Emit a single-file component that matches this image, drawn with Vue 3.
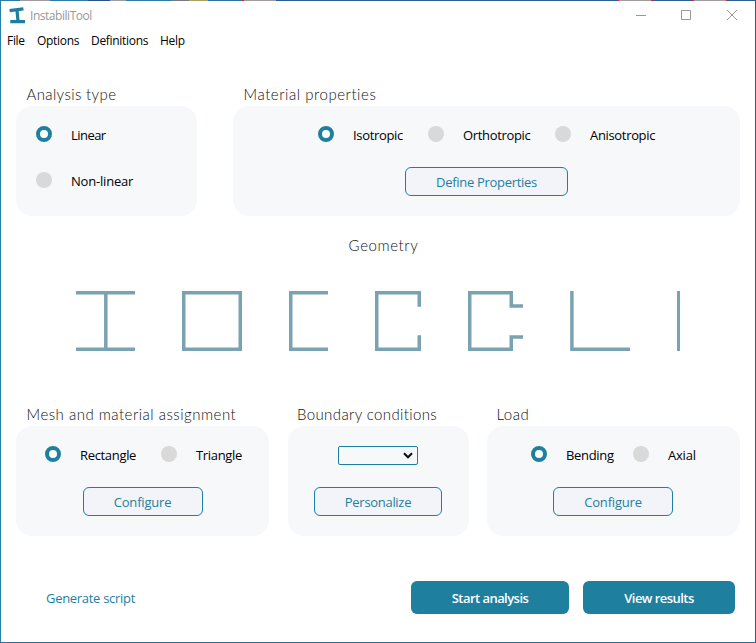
<script setup>
import { reactive } from 'vue'

const menu = ['File', 'Options', 'Definitions', 'Help']
const chosen = reactive({ analysis: 'Linear', material: 'Isotropic', mesh: 'Rectangle', load: 'Bending' })

// Cross sections: width of the drawing and its centre line
const shapes = [
  { name: 'i', w: 59, d: 'M0 1.75H59M0 58.25H59M29.8 2V58' },
  { name: 'box', w: 60, d: 'M1.75 1.75H58.25V58.25H1.75Z' },
  { name: 'channel', w: 39, d: 'M39 1.75H1.75V58.25H39' },
  { name: 'lipped', w: 46, d: 'M44.25 15.8V1.75H1.75V58.25H44.25V44.2' },
  { name: 'sigma', w: 55, d: 'M55 14.9H43.25V1.75H1.75V58.25H43.25V46.1H55' },
  { name: 'angle', w: 60, d: 'M1.9 0V58.25H60' },
  { name: 'plate', w: 3, d: 'M1.5 0V60' },
]
</script>

<template>
  <div class="window">
    <header class="titlebar">
      <svg class="logo" width="17" height="17" viewBox="0 0 17 17">
        <path d="M.6 3.7 14.4 1.8M1.3 14.7H16" stroke-width="3.3" />
        <path d="M8 3.2 9 14" stroke-width="3.2" />
      </svg>
      <span class="app-name">InstabiliTool</span>
      <svg class="controls" width="103" height="12" viewBox="0 0 103 12">
        <path d="M0 6.5H10M45.5 1.5H54.5V10.5H45.5ZM91 1 101 11M101 1 91 11" />
      </svg>
    </header>
    <nav class="menu">
      <span v-for="m in menu" :key="m" :class="m.toLowerCase()">{{ m }}</span>
    </nav>

    <main>
      <div class="row top">
        <section>
          <h2 class="h-analysis">Analysis type</h2>
          <div class="panel analysis">
            <label v-for="o in ['Linear', 'Non-linear']" :key="o" :class="o.toLowerCase()">
              <input v-model="chosen.analysis" type="radio" :value="o" name="analysis" /><span>{{ o }}</span>
            </label>
          </div>
        </section>
        <section>
          <h2 class="h-material">Material properties</h2>
          <div class="panel material">
            <div class="options">
              <label v-for="o in ['Isotropic', 'Orthotropic', 'Anisotropic']" :key="o" :class="o.toLowerCase()">
                <input v-model="chosen.material" type="radio" :value="o" name="material" /><span>{{ o }}</span>
              </label>
            </div>
            <button class="outline define">Define Properties</button>
          </div>
        </section>
      </div>

      <h2 class="h-geometry">Geometry</h2>
      <div class="shapes">
        <svg v-for="s in shapes" :key="s.name" :width="s.w" height="60" :viewBox="`0 0 ${s.w} 60`">
          <path :d="s.d" />
        </svg>
      </div>

      <div class="row bottom">
        <section>
          <h2 class="h-mesh">Mesh and material assignment</h2>
          <div class="panel mesh">
            <div class="options">
              <label v-for="o in ['Rectangle', 'Triangle']" :key="o" :class="o.toLowerCase()">
                <input v-model="chosen.mesh" type="radio" :value="o" name="mesh" /><span>{{ o }}</span>
              </label>
            </div>
            <button class="outline">Configure</button>
          </div>
        </section>
        <section>
          <h2 class="h-boundary">Boundary conditions</h2>
          <div class="panel boundary">
            <div class="select">
              <svg width="10" height="7" viewBox="0 0 10 7"><path d="M1 1.2 5 5.2 9 1.2" /></svg>
            </div>
            <button class="outline personalize">Personalize</button>
          </div>
        </section>
        <section>
          <h2 class="h-load">Load</h2>
          <div class="panel load">
            <div class="options">
              <label v-for="o in ['Bending', 'Axial']" :key="o" :class="o.toLowerCase()">
                <input v-model="chosen.load" type="radio" :value="o" name="load" /><span>{{ o }}</span>
              </label>
            </div>
            <button class="outline">Configure</button>
          </div>
        </section>
      </div>
    </main>

    <footer>
      <a class="script">Generate script</a>
      <button class="solid start">Start analysis</button>
      <button class="solid view">View results</button>
    </footer>
  </div>
</template>

<style>
body { margin: 0; background: #fff; }
</style>

<style scoped>
* { box-sizing: border-box; }
.window {
  width: 756px; height: 643px; display: flex; flex-direction: column;
  border: 1px solid; border-color: #2c5c96 #2c5c96 #2b7098 #2580a5;
  border-top: 0; background: #fff; color: #000; overflow: hidden;
  font: 13px/18px "Open Sans", "Noto Sans", sans-serif;
}
.titlebar {
  height: 31px; flex: none; display: flex; align-items: center; padding: 0 16px 0 8px;
  background: linear-gradient(90deg, #2e7aa3 19px, #a09b9d 19px 49px, #2e7aa3 49px 87px, #2b4f8c 87px 109px, #a09b9d 109px 125px, #2e7aa3 125px 170px, #777b80 170px 188px, #ad9e64 188px 207px, #2e74a0 207px 241px, #c32b35 241px 243px, #a09b9d 243px 275px, #2c5c96 275px 616px, #c32b35 616px 618px, #a09b9d 618px 650px, #c32b35 650px 652px, #2c5c96 652px 691px, #c32b35 691px 693px, #a09b9d 693px 725px, #c32b35 725px 727px, #2c5c96 727px) 0 0 / 100% 1px no-repeat;
}
.logo { fill: none; stroke: #1f7f9f; }
.app-name { margin-left: 4px; font-size: 12px; color: #999; letter-spacing: -.46px; flex: 1; }
.controls { fill: none; stroke: #999; position: relative; top: -1px; }
.menu { height: 20px; flex: none; display: flex; padding-left: 6px; font-size: 12px; line-height: 20px; white-space: nowrap; }
.file { width: 30px; }
.options:not(div) { width: 54px; }
.definitions { width: 69px; }
.menu span { letter-spacing: -.3px; }
main { flex: none; height: 485px; padding: 33px 15px 0; }
.row { display: flex; justify-content: space-between; }
h2 {
  margin: 0; padding-left: 10.5px; height: 22px; white-space: nowrap;
  font: 300 15px/21px Lato, sans-serif; color: #111; letter-spacing: .5px;
}
.h-analysis, .h-boundary { letter-spacing: .38px; }
.h-boundary, .h-load { padding-left: 9.5px; }
.h-material { letter-spacing: .55px; }
.panel { height: 110px; border-radius: 16px; background: #f7f8fa; display: flex; flex-direction: column; align-items: center; padding-top: 20px; }
.analysis { width: 181px; gap: 30px; align-items: flex-start; padding-left: 20px; }
.material { width: 507px; }
.mesh, .load { width: 253px; }
.boundary { width: 181px; }
.panel .options { display: flex; align-self: flex-start; width: auto; }
.material .options { padding-left: 85px; }
.mesh .options { padding-left: 29px; }
.load .options { padding-left: 44px; }
label { display: flex; height: 16px; white-space: nowrap; letter-spacing: -.33px; }
.non-linear { letter-spacing: -.2px; }
.linear { letter-spacing: -.55px; }
.axial { letter-spacing: -.2px; }
label span { margin: 0 0 0 19px; line-height: 18px; }
input {
  appearance: none; flex: none; width: 16px; height: 16px; margin: 0;
  border-radius: 50%; background: #d9d9d9;
}
input:checked { border: 4px solid #1f7f9f; background: #fff; }
label.isotropic { width: 110px; }
label.orthotropic { width: 127px; }
label.rectangle { width: 116px; }
label.bending { width: 102px; }
button { font: 13px/18px "Open Sans", "Noto Sans", sans-serif; padding: 0; white-space: nowrap; }
.outline {
  width: 120px; height: 29px; margin-top: 25px; border: 1px solid #1f7f9f;
  border-radius: 6px; background: #f2f4f9; color: #1f7f9f; letter-spacing: -.2px;
}
.load .outline { align-self: flex-start; margin-left: 66px; }
.define { width: 163px; letter-spacing: -.3px; }
.personalize { width: 128px; margin-top: 22px; letter-spacing: -.3px; }
.select {
  width: 80px; height: 19px; border: 1px solid #1f7f9f; border-radius: 2px;
  display: flex; align-items: center; justify-content: flex-end; padding-right: 4px;
}
.select path { fill: none; stroke: #111; stroke-width: 2.1; }
.h-geometry { margin-top: 19px; padding: 0 0 0 11px; text-align: center; letter-spacing: .6px; }
.shapes { display: flex; justify-content: center; gap: 47px; margin-top: 34px; height: 60px; }
.shapes path { fill: none; stroke: #7aa3b2; stroke-width: 3.5; }
.bottom { margin-top: 53px; }
footer { flex: 1; display: flex; align-items: flex-start; padding: 45px 20px 0 45px; }
.script { flex: 1; color: #1f7f9f; line-height: 34px; letter-spacing: -.3px; }
.solid { height: 33px; border: 0; border-radius: 6px; background: #1f7f9f; color: #fff; font-weight: 600; letter-spacing: -.6px; }
.start { width: 158px; margin-right: 14px; }
.view { width: 152px; }
.solid { letter-spacing: -.55px; }
</style>
